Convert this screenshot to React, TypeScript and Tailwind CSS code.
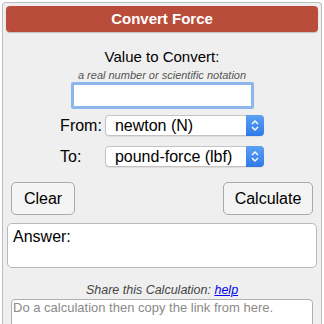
import React, { useState } from 'react';

const fromUnits = ['newton (N)', 'kilonewton (kN)', 'dyne (dyn)', 'kilogram-force (kgf)', 'pound-force (lbf)'];
const toUnits = ['pound-force (lbf)', 'newton (N)', 'kilonewton (kN)', 'dyne (dyn)', 'kilogram-force (kgf)'];

const SelectBox: React.FC<{ value: string; options: string[]; onChange: (v: string) => void }> = ({
  value,
  options,
  onChange
}) => (
  <div className="flex h-[21px] w-[159px] rounded-[4px] border border-[#c4c4c4] bg-white shadow-[0_1px_1px_rgba(0,0,0,0.08)]">
    <select
      value={value}
      onChange={e => onChange(e.target.value)}
      className="min-w-0 flex-1 appearance-none bg-transparent pl-[9px] text-[16px] leading-[19px] text-black outline-none"
    >
      {options.map(o => (
        <option key={o}>{o}</option>
      ))}
    </select>
    <span className="-my-px -mr-px flex w-[18px] items-center justify-center rounded-r-[4px] bg-gradient-to-b from-[#5ba0f5] to-[#2f79e8]">
      <svg width="8" height="13" viewBox="0 0 8 13" fill="none" stroke="white" strokeWidth="1.4">
        <path d="M1 5 L4 2 L7 5" />
        <path d="M1 8 L4 11 L7 8" />
      </svg>
    </span>
  </div>
);

export default function App() {
  const [value, setValue] = useState('');
  const [from, setFrom] = useState(fromUnits[0]);
  const [to, setTo] = useState(toUnits[0]);

  return (
    <div className="pl-[2px] pt-[2px] font-['Liberation_Sans',Arial,sans-serif] text-black">
      <div className="w-[320px] rounded-t-[4px] border border-b-0 border-[#bdbdbd] bg-[#efefef] p-[3px] pb-0">
        <div className="flex h-[26px] items-center justify-center rounded-[4px] bg-[#b94c3a] text-[15px] font-bold text-white shadow-[0_1px_1px_rgba(0,0,0,0.2)]">
          Convert Force
        </div>

        <div className="mt-[16px] text-center text-[15px] leading-[18px]">Value to Convert:</div>
        <div className="mt-[3px] text-center text-[11px] italic leading-[13px] text-[#555]">
          a real number or scientific notation
        </div>
        <div className="flex justify-center">
          <input
            value={value}
            onChange={e => setValue(e.target.value)}
            className="h-[27px] w-[183px] rounded-[2px] border-[3px] border-[#8db6ec] bg-white px-1 text-[15px] outline-none"
          />
        </div>

        <div className="mt-[6px] grid grid-cols-[auto_auto] items-center justify-center gap-x-[3px] gap-y-[10px] text-[16px] leading-[21px]">
          <span>From:</span>
          <SelectBox value={from} options={fromUnits} onChange={setFrom} />
          <span>To:</span>
          <SelectBox value={to} options={toUnits} onChange={setTo} />
        </div>

        <div className="mt-[15px] flex justify-between px-[5px]">
          <button className="h-[33px] w-[64px] rounded-[5px] border border-[#a9a9a9] bg-[#f4f4f4] text-[16px]">
            Clear
          </button>
          <button className="h-[33px] w-[90px] rounded-[5px] border border-[#a9a9a9] bg-[#f4f4f4] text-[16px]">
            Calculate
          </button>
        </div>

        <div className="mx-px mt-[8px] h-[45px] rounded-[5px] border border-[#b8b8b8] bg-white px-[5px] pt-[4px] text-[16px] leading-[18px]">
          Answer:
        </div>

        <div className="mt-[15px] text-center text-[12.5px] italic leading-[15px] text-[#444]">
          Share this Calculation:{' '}
          <a href="#" className="text-[#0000ee] underline">
            help
          </a>
        </div>
        <div className="mt-[1px] px-[5px]">
          <textarea
            readOnly
            placeholder="Do a calculation then copy the link from here."
            className="block h-[40px] w-full resize-none rounded-[4px] border border-[#b0b0b0] bg-white px-[1px] text-[13px] leading-[16px] placeholder:text-[#8a8a8a] outline-none"
          />
        </div>
      </div>
    </div>
  );
}
